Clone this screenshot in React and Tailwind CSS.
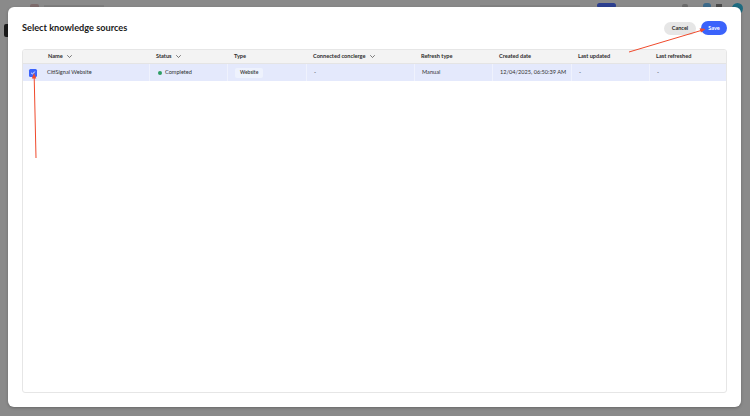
import React from "react";

const Chevron = () => (
  <svg width="5" height="3" viewBox="0 0 5 3" className="ml-[4px] inline-block">
    <path d="M0.5 0.5 L2.5 2.5 L4.5 0.5" fill="none" stroke="#444" strokeWidth="0.7" strokeLinecap="round" strokeLinejoin="round" />
  </svg>
);

const cols = "grid grid-cols-[18px_108px_78px_79px_108px_78px_79px_78px_79px]";

export default function App() {
  const headers = [
    { t: "Name", c: true },
    { t: "Status", c: true },
    { t: "Type" },
    { t: "Connected concierge", c: true },
    { t: "Refresh type" },
    { t: "Created date" },
    { t: "Last updated" },
    { t: "Last refreshed" },
  ];
  return (
    <div className="relative w-[750px] h-[416px] bg-[#8a8a8a] overflow-hidden" style={{ fontFamily: "Lato, 'Open Sans', sans-serif" }}>
      {/* faint background page */}
      <div className="absolute left-[4px] top-[24px] w-[6px] h-[13px] rounded-[2px] bg-[#1a1a1a]" />
      <div className="absolute left-[30px] top-[4px] w-[9px] h-[5px] rounded-[2px] bg-[#7d6b6b]" />
      <div className="absolute left-[44px] top-[5px] w-[60px] h-[2px] bg-[#7e7e7e]" />
      <div className="absolute left-[480px] top-[5px] w-[100px] h-[2px] bg-[#838383]" />
      <div className="absolute left-[597px] top-[3px] w-[19px] h-[5px] rounded-[3px] bg-[#2c3f8f]" />
      <div className="absolute left-[682px] top-[4px] w-[6px] h-[4px] rounded-full bg-[#6a6a6a]" />
      <div className="absolute left-[703px] top-[3px] w-[8px] h-[6px] rounded-full bg-[#3d6a8a]" />
      <div className="absolute left-[716px] top-[4px] w-[6px] h-[4px] bg-[#4a4a4a]" />
      <div className="absolute left-[732px] top-[3px] w-[11px] h-[11px] rounded-full bg-[#1d6b80]" />

      {/* modal */}
      <div className="absolute left-[8px] top-[7px] w-[733px] h-[400px] bg-white rounded-[6px] px-[14px] pt-[14px] pb-[14px] flex flex-col shadow-[0_1px_3px_rgba(0,0,0,0.25)]">
        <div className="flex items-center justify-between h-[14px]">
          <h1 className="text-[9.2px] font-bold text-[#1a1a1a] -mt-[1px]">Select knowledge sources</h1>
          <div className="flex items-center gap-[5px]">
            <button className="h-[13px] w-[32px] rounded-full bg-[#e6e6e6] text-[5.5px] font-bold text-[#2a2a2a] flex items-center justify-center">Cancel</button>
            <button className="h-[14px] w-[26px] rounded-full bg-[#3b63fb] text-[5.5px] font-bold text-white flex items-center justify-center">Save</button>
          </div>
        </div>

        <div className="mt-[14px] flex-1 border border-[#e6e6e6] rounded-[3px] overflow-hidden">
          <div className={`${cols} h-[14px] bg-[#f3f3f3] border-b border-[#e4e4e4] text-[5.6px] font-bold text-[#2c2c2c] items-center`}>
            <div />
            {headers.map((h, i) => (
              <div key={i} className="pl-[7px] flex items-center">
                {h.t}
                {h.c && <Chevron />}
              </div>
            ))}
          </div>
          <div className={`${cols} h-[17px] bg-[#e4e9fc] text-[5.6px] text-[#333] items-stretch`}>
            <div className="flex items-center pl-[6px]">
              <div className="w-[8px] h-[8px] rounded-[1.5px] bg-[#3b63fb] flex items-center justify-center">
                <svg width="6" height="6" viewBox="0 0 6 6">
                  <path d="M1.4 3.1 L2.5 4.1 L4.6 1.8" fill="none" stroke="white" strokeWidth="0.9" strokeLinecap="round" strokeLinejoin="round" />
                </svg>
              </div>
            </div>
            <div className="pl-[6px] flex items-center">CitiSignal Website</div>
            <div className="pl-[8px] flex items-center border-l border-[#eff2fd]">
              <span className="w-[4px] h-[4px] rounded-full bg-[#2d9d64] mr-[3px]" />
              Completed
            </div>
            <div className="pl-[7px] flex items-center border-l border-[#eff2fd]">
              <span className="bg-[#eef2fd] rounded-[2px] px-[5px] h-[10px] flex items-center text-[5px] font-semibold text-[#333]">Website</span>
            </div>
            <div className="pl-[7px] flex items-center border-l border-[#eff2fd]">-</div>
            <div className="pl-[7px] flex items-center border-l border-[#eff2fd]">Manual</div>
            <div className="pl-[7px] flex items-center border-l border-[#eff2fd]">12/04/2025, 06:50:39 AM</div>
            <div className="pl-[7px] flex items-center border-l border-[#eff2fd]">-</div>
            <div className="pl-[7px] flex items-center border-l border-[#eff2fd]">-</div>
          </div>
        </div>
      </div>

      {/* annotation arrows */}
      <svg className="absolute left-0 top-0 pointer-events-none" width="750" height="416" viewBox="0 0 750 416">
        <line x1="36" y1="158" x2="34.2" y2="77" stroke="#f04a2c" strokeWidth="1" />
        <path d="M34 73 L31.8 78.5 L36.3 78.4 Z" fill="#f04a2c" />
        <line x1="629" y1="52" x2="701" y2="30.5" stroke="#f04a2c" strokeWidth="1" />
        <path d="M705.5 29 L699.6 28.3 L701 32.6 Z" fill="#f04a2c" />
      </svg>
    </div>
  );
}
